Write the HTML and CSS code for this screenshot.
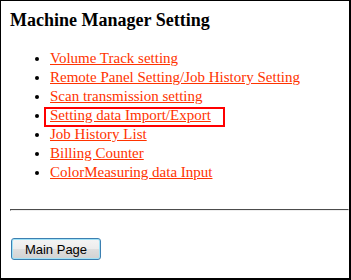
FILE: index.html
```html
<!DOCTYPE html>
<html lang="en">
<head>
    <meta charset="UTF-8">
    <title>Machine Manager Setting</title>
    <link rel="stylesheet" href="styles.css">
</head>
<body>
    <div class="frame">
        <h3 class="title">Machine Manager Setting</h3>
        <ul class="menu">
            <li><a href="#">Volume Track setting</a></li>
            <li><a href="#">Remote Panel Setting/Job History Setting</a></li>
            <li><a href="#">Scan transmission setting</a></li>
            <li><span class="marked"><a href="#">Setting data Import/Export</a></span></li>
            <li><a href="#">Job History List</a></li>
            <li><a href="#">Billing Counter</a></li>
            <li><a href="#">ColorMeasuring data Input</a></li>
        </ul>
        <hr class="divider">
        <button class="main-btn" type="button">Main Page</button>
    </div>
</body>
</html>
```

FILE: styles.css
```css
body, html {
    margin: 0;
    padding: 0;
    background: #ffffff;
    font-family: "Liberation Serif", "Times New Roman", serif;
}
.frame {
    box-sizing: border-box;
    width: 351px;
    height: 280px;
    border: 1px solid #000000;
    border-right-width: 2px;
    border-bottom-width: 2px;
    padding: 9px 0 0 9px;
    overflow: hidden;
}
.title {
    margin: 0 0 18px 0;
    font-size: 18px;
    font-weight: bold;
    color: #000000;
}
.menu {
    margin: 0;
    padding-left: 40px;
    font-size: 15px;
    line-height: 19px;
}
.menu a {
    color: #ff3300;
    text-decoration: underline;
}
.marked {
    position: relative;
}
.marked::after {
    content: "";
    position: absolute;
    left: -6px;
    right: -14px;
    top: 0;
    bottom: -4px;
    border: 2px solid #ff0000;
}
.divider {
    margin: 27px 0 0 0;
    border: 1px inset #eeeeee;
    border-top-color: #a0a0a0;
    border-left-color: #a0a0a0;
    height: 0;
}
.main-btn {
    margin: 27px 0 0 1px;
    width: 90px;
    height: 22px;
    padding: 0;
    font-family: "Liberation Sans", Arial, sans-serif;
    font-size: 13px;
    color: #000000;
    border: 1px solid #3c7fb1;
    border-radius: 3px;
    box-shadow: inset 0 0 0 1px #9fe2f7;
    background: linear-gradient(#f4f4f4 0%, #ececec 50%, #dedede 51%, #d2d2d2 100%);
}
```
